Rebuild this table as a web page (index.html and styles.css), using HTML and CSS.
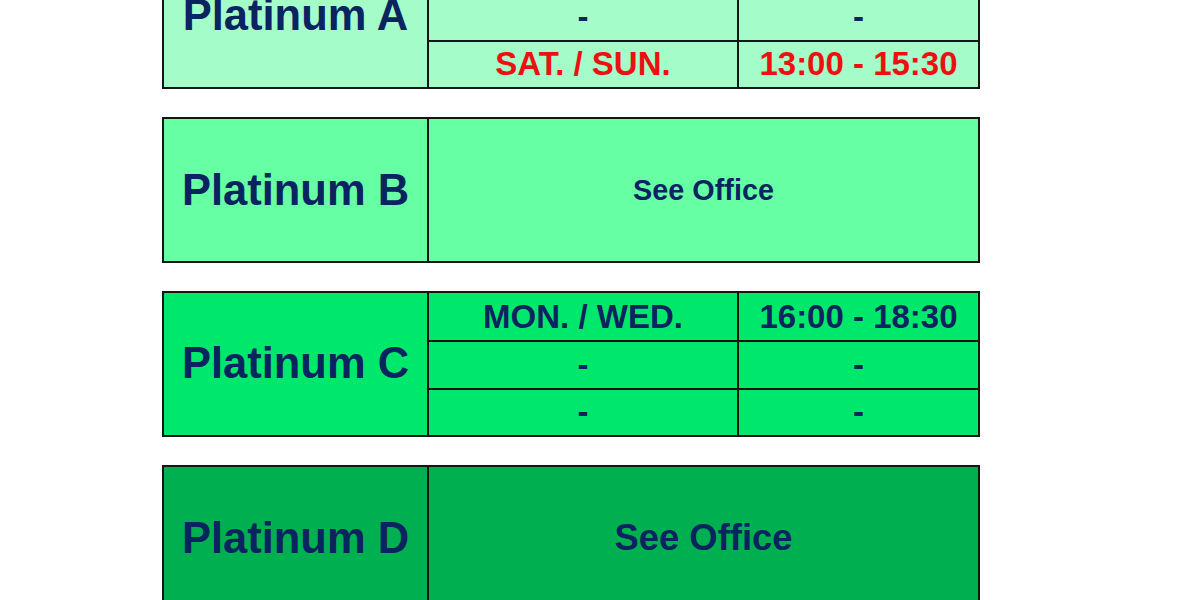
FILE: index.html
```html
<!DOCTYPE html>
<html>
<head>
<meta charset="utf-8">
<link rel="stylesheet" href="styles.css">
</head>
<body>
<div class="page">
  <div class="block block-a">
    <div class="label">Platinum A</div>
    <div class="cell">-</div>
    <div class="cell">-</div>
    <div class="cell">-</div>
    <div class="cell">-</div>
    <div class="cell red">SAT. / SUN.</div>
    <div class="cell red">13:00 - 15:30</div>
  </div>
  <div class="block block-b">
    <div class="label">Platinum B</div>
    <div class="wide small">See Office</div>
  </div>
  <div class="block block-c">
    <div class="label">Platinum C</div>
    <div class="cell">MON. / WED.</div>
    <div class="cell">16:00 - 18:30</div>
    <div class="cell">-</div>
    <div class="cell">-</div>
    <div class="cell">-</div>
    <div class="cell">-</div>
  </div>
  <div class="block block-d">
    <div class="label">Platinum D</div>
    <div class="wide large">See Office</div>
  </div>
</div>
</body>
</html>
```

FILE: styles.css
```css
html, body {
  margin: 0;
  padding: 0;
  background: #ffffff;
  overflow: hidden;
}

.page {
  display: flex;
  flex-direction: column;
  gap: 28px;
  margin-top: -57px;
  margin-left: 162px;
  width: 818px;
  font-family: "Liberation Sans", Arial, sans-serif;
  font-weight: bold;
  color: #0a2460;
}

.block {
  box-sizing: border-box;
  height: 146px;
  border: 2px solid #151515;
  display: grid;
  grid-template-columns: 265px 308px 1fr;
  grid-template-rows: repeat(3, 1fr);
}

.block-a { background: #a4fdc9; }
.block-b { background: #66ffa4; }
.block-c { background: #00e86c; }
.block-d { background: #00b050; }

.label {
  grid-row: 1 / span 3;
  border-right: 2px solid #151515;
  display: flex;
  align-items: center;
  justify-content: center;
  font-size: 43.5px;
}

.cell {
  display: flex;
  align-items: center;
  justify-content: center;
  font-size: 33px;
  border-top: 2px solid #151515;
}

.cell:nth-child(2), .cell:nth-child(3) {
  border-top: none;
}

.cell:nth-child(odd) {
  border-left: 2px solid #151515;
}

.red { color: #ee1010; }

.wide {
  grid-row: 1 / span 3;
  grid-column: 2 / span 2;
  display: flex;
  align-items: center;
  justify-content: center;
}

.small { font-size: 28.8px; }
.large { font-size: 36.4px; }
```
